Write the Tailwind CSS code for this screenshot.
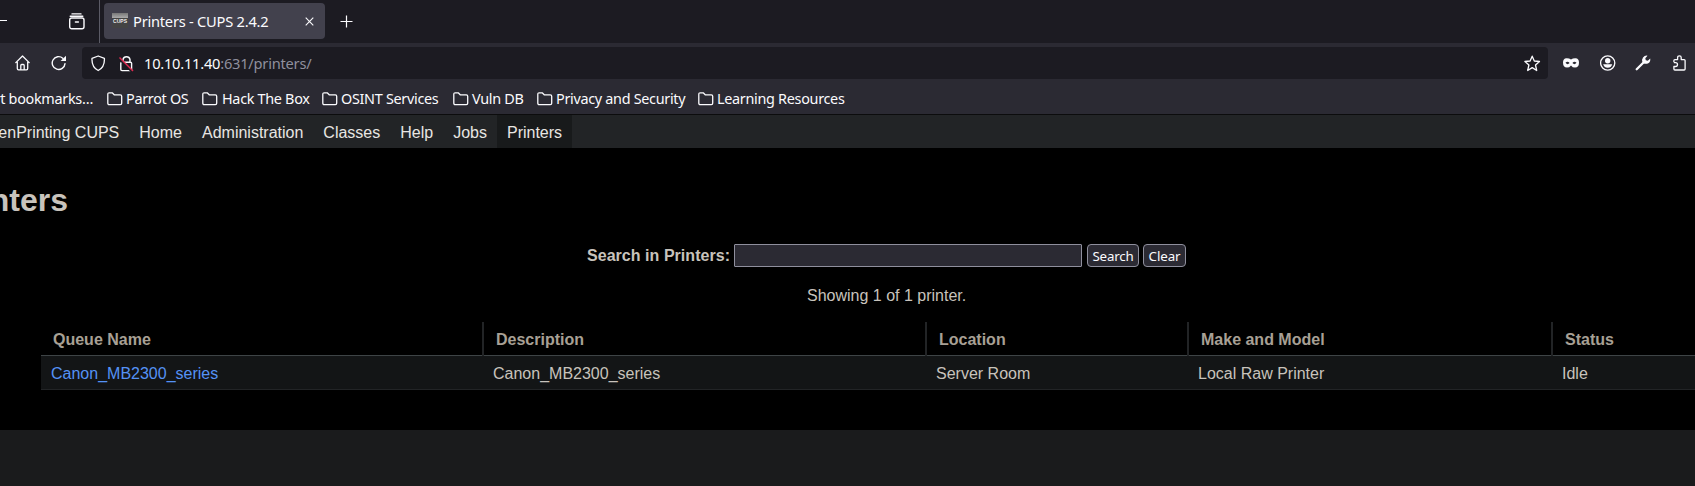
<!DOCTYPE html>
<html lang="en">
<head>
<meta charset="utf-8">
<title>Printers - CUPS 2.4.2</title>
<script src="https://cdn.jsdelivr.net/npm/@tailwindcss/browser@4"></script>
</head>
<body class="w-[1695px] h-[486px] overflow-hidden bg-black font-['Liberation_Sans',sans-serif] text-base text-[#c8c3bc]">
<svg class="hidden">
  <symbol id="folder" viewBox="0 0 16 14"><path d="M.8 11.2V2.2Q.8.8 2.2.8H5.2L7.2 2.8H13.3Q14.7 2.8 14.7 4.2V11.2Q14.7 12.6 13.3 12.6H2.2Q.8 12.6.8 11.2Z" fill="none" stroke="currentColor" stroke-width="1.3" stroke-linejoin="round"/></symbol>
</svg>
<header class="font-['Noto_Sans',sans-serif] text-[#fbfbfe]">
  <div class="flex h-[43px] bg-[#1c1b22]">
    <div class="flex w-[100px] h-[43px] shrink-0 border-r border-[#5b5b66]">
      <div class="w-[7px] h-px mt-5 bg-[#fbfbfe]"></div>
      <svg class="w-[18px] h-[18px] ml-[61px] mt-3" viewBox="0 0 18 18" fill="none" stroke="currentColor" stroke-width="1.4" stroke-linecap="round"><path d="M4 1.9H13M2.2 4.3H14.8"/><rect x="1.7" y="6" width="14.3" height="10.8" rx="2"/><path d="M7.4 10H10.4"/></svg>
    </div>
    <div class="flex items-center w-[221px] h-9 mt-[3px] ml-1 shrink-0 rounded bg-[#42414d] text-[14.67px]">
      <svg class="w-4 h-4 ml-2 -mt-px shrink-0" viewBox="0 0 16 16"><defs><linearGradient id="g" x2="0" y2="1"><stop stop-color="#777"/><stop offset="1" stop-color="#aaa"/></linearGradient></defs><path fill="url(#g)" d="M0 0h16v5H0z"/><path fill="#444" d="M0 5h16v10H0z"/><text x="1" y="10.3" textLength="14" lengthAdjust="spacingAndGlyphs" font-family="Liberation Sans" font-size="6" font-weight="bold" fill="#eee">CUPS</text></svg>
      <span class="ml-[5px] w-[172px] whitespace-nowrap tracking-[-0.24px]">Printers - CUPS 2.4.2</span>
      <svg class="w-[9px] h-[9px] shrink-0" viewBox="0 0 9 9" stroke="currentColor" stroke-width="1.1"><path d="M.7.7 8.3 8.3M8.3.7.7 8.3"/></svg>
    </div>
    <svg class="w-[13px] h-[13px] mt-[15px] ml-[15px]" viewBox="0 0 13 13" stroke="currentColor" stroke-width="1.2"><path d="M6.5 .5V12.5M.5 6.5H12.5"/></svg>
  </div>
  <div class="flex items-center h-10 bg-[#2b2a33]">
    <svg class="w-4 h-4 ml-[15px]" viewBox="0 0 16 16" fill="none" stroke="currentColor" stroke-width="1.3" stroke-linejoin="round" stroke-linecap="round"><path d="M.8 7.6 7.5 1 14.2 7.6M2.3 6.8V13.6Q2.3 14.8 3.5 14.8H11.5Q12.7 14.8 12.7 13.6V6.8M5.8 14.5V10.4Q5.8 9.5 6.7 9.5H8.3Q9.2 9.5 9.2 10.4V14.5"/></svg>
    <svg class="w-4 h-4 ml-5" viewBox="0 0 16 16"><path d="M14 8.6A6.4 6.4 0 1 1 11.8 3.2" fill="none" stroke="currentColor" stroke-width="1.4" stroke-linecap="round"/><path d="M15 .8V6H9.6Z" fill="currentColor"/></svg>
    <div class="flex items-center w-[1466px] h-8 ml-[15px] rounded bg-[#1c1b22] text-[14.67px]">
      <svg class="w-[15px] h-[17px] ml-[9px]" viewBox="0 0 15 17" fill="none" stroke="currentColor" stroke-width="1.3" stroke-linejoin="round"><path d="M7.2 1 13.4 3.3Q13.9 12.3 7.2 15.5Q.5 12.3 1 3.3Z"/></svg>
      <svg class="w-[15px] h-[17px] ml-[13px]" viewBox="0 0 15 17" fill="none"><path d="M4 7V4.5A3.6 3.6 0 0 1 11 4.5V7M3.2 7.2H11.5Q12.6 7.2 12.6 8.3V14.5Q12.6 15.6 11.5 15.6H3Q1.8 15.6 1.8 14.5V8.3Q1.8 7.2 3.2 7.2" stroke="currentColor" stroke-width="1.4"/><path d="M0 3.8 13 16.8" stroke="#1c1b22" stroke-width="2"/><path d="M.5 2.5 14 16" stroke="#e22850" stroke-width="1.4"/></svg>
      <span class="ml-[10px] whitespace-nowrap tracking-[-0.24px]">10.10.11.40<span class="text-[#8f8f9d]">:631/printers/</span></span>
      <svg class="w-[17px] h-[17px] ml-auto mr-[7px]" viewBox="0 0 17 17" fill="none" stroke="currentColor" stroke-width="1.3" stroke-linejoin="round"><path d="M8.2 1.2 10.3 6 15.5 6.5 11.5 10 12.7 15.5 8.2 12.6 3.7 15.5 4.9 10 .9 6.5 6.1 6Z"/></svg>
    </div>
    <svg class="w-4 h-[10px] ml-[15px]" viewBox="0 0 16 10"><path fill="currentColor" fill-rule="evenodd" d="M3.5.3Q6 .2 8 1.4Q10 .2 12.5.3Q16 .6 16 4.4Q16 9.4 12 9.6Q9.6 9.6 8 7.4Q6.4 9.6 4 9.6Q0 9.4 0 4.4Q0 .6 3.5.3ZM2.5 4.8Q4.5 7.4 6.6 5Q4.5 2.4 2.5 4.8ZM9.4 5Q11.5 7.4 13.5 4.8Q11.5 2.4 9.4 5Z"/></svg>
    <svg class="w-4 h-4 ml-[21px]" viewBox="0 0 16 16"><circle cx="7.7" cy="8" r="7.1" fill="none" stroke="currentColor" stroke-width="1.3"/><circle cx="7.7" cy="5.7" r="2.7" fill="currentColor"/><path d="M3.2 9.3H12.2Q11.2 12.8 7.7 12.8Q4.2 12.8 3.2 9.3Z" fill="currentColor"/></svg>
    <svg class="w-4 h-4 ml-[19px]" viewBox="0 0 16 16"><path d="M1.7 14.3 8.5 7.5" stroke="currentColor" stroke-width="2.3" stroke-linecap="round"/><path d="M12.5.7 10.3 3.2 10.8 5.2 12.8 5.7 15.2 3.4Q15.8 6.6 13.3 8.2Q11 9.4 8.8 8.4L7.4 7Q6.6 4.5 8 2.5Q9.8.2 12.5.7Z" fill="currentColor"/></svg>
    <svg class="w-4 h-4 ml-[21px]" viewBox="0 0 16 16" fill="none" stroke="currentColor" stroke-width="1.3" stroke-linejoin="round"><path d="M1.9 7.3V5.6Q1.9 4.6 2.9 4.6H5.6V2.6A1.8 1.8 0 0 1 9.2 2.6V4.6H12.1Q13.1 4.6 13.1 5.6V14Q13.1 15 12.1 15H2.9Q1.9 15 1.9 14V11.5H3.6A1.9 1.9 0 0 0 3.6 7.7H1.9"/></svg>
  </div>
  <div class="flex items-center h-[31px] bg-[#2b2a33] text-[14.4px] leading-5 tracking-[-0.3px] whitespace-nowrap">
    <span class="flex w-[107px] shrink-0"><span class="w-[93px] flex justify-end">Import bookmarks…</span></span>
    <span class="flex items-center w-[95px]"><svg class="w-4 h-[14px] mr-[3px]"><use href="#folder"/></svg>Parrot OS</span>
    <span class="flex items-center w-[120px]"><svg class="w-4 h-[14px] mr-1"><use href="#folder"/></svg>Hack The Box</span>
    <span class="flex items-center w-[131px]"><svg class="w-4 h-[14px] mr-[3px]"><use href="#folder"/></svg>OSINT Services</span>
    <span class="flex items-center w-[84px]"><svg class="w-4 h-[14px] mr-[3px]"><use href="#folder"/></svg>Vuln DB</span>
    <span class="flex items-center w-[161px]"><svg class="w-4 h-[14px] mr-[3px]"><use href="#folder"/></svg>Privacy and Security</span>
    <span class="flex items-center"><svg class="w-4 h-[14px] mr-[3px]"><use href="#folder"/></svg>Learning Resources</span>
  </div>
</header>
<nav class="flex h-[34px] border-t border-[#0c0c0d] bg-[#222426] text-[#e8e6e3] leading-[35px] whitespace-nowrap">
  <a class="px-2.5 -ml-[33px]">OpenPrinting CUPS</a><a class="px-2.5">Home</a><a class="px-2.5">Administration</a><a class="px-2.5">Classes</a><a class="px-2.5">Help</a><a class="px-2.5">Jobs</a><a class="px-2.5 h-[33px] bg-[#181a1b]">Printers</a>
</nav>
<main class="h-[282px] bg-black overflow-hidden">
  <h1 class="mt-[34px] -ml-[53px] text-[32px] leading-9 font-bold">Printers</h1>
  <form class="flex items-center mt-[25px] ml-[587px] h-6">
    <label class="w-[147px] font-bold whitespace-nowrap tracking-[0.04px] mt-px">Search in Printers:</label>
    <input class="w-[348px] h-[23px] border border-[#8f8f9d] rounded-[1px] bg-[#2b2a33]">
    <button type="button" class="w-[52px] h-[23px] ml-[5px] border border-[#8f8f9d] rounded bg-[#2b2a33] text-[#fbfbfe] font-['Noto_Sans',sans-serif] text-[13.33px] leading-[23px] tracking-[-0.2px]">Search</button>
    <button type="button" class="w-[43px] h-[23px] ml-1 border border-[#8f8f9d] rounded bg-[#2b2a33] text-[#fbfbfe] font-['Noto_Sans',sans-serif] text-[13.33px] leading-[23px] tracking-[-0.1px]">Clear</button>
  </form>
  <p class="mt-[17px] ml-[807px] leading-6">Showing 1 of 1 printer.</p>
  <div class="ml-[41px] mt-[14px] grid grid-cols-[443px_443px_262px_364px_142px] whitespace-nowrap">
    <div class="h-[34px] pl-3 border-b border-[#3e4446] font-bold leading-[35px] text-[#a8a095]">Queue Name</div>
    <div class="flex h-[34px] border-b border-[#3e4446] font-bold leading-[35px] text-[#a8a095]"><i class="-ml-0.5 w-0.5 h-[34px] mr-3 bg-[#222426]"></i>Description</div>
    <div class="flex h-[34px] border-b border-[#3e4446] font-bold leading-[35px] text-[#a8a095]"><i class="-ml-0.5 w-0.5 h-[34px] mr-3 bg-[#222426]"></i>Location</div>
    <div class="flex h-[34px] border-b border-[#3e4446] font-bold leading-[35px] text-[#a8a095]"><i class="-ml-0.5 w-0.5 h-[34px] mr-3 bg-[#222426]"></i>Make and Model</div>
    <div class="flex h-[34px] border-b border-[#3e4446] font-bold leading-[35px] text-[#a8a095]"><i class="-ml-0.5 w-0.5 h-[34px] mr-3 bg-[#222426]"></i>Status</div>
    <div class="h-[34px] pl-[10px] border-b border-[#222426] bg-[#131516] leading-[35px] text-[#5592f5]">Canon_MB2300_series</div>
    <div class="h-[34px] pl-[9px] border-b border-[#222426] bg-[#131516] leading-[35px]">Canon_MB2300_series</div>
    <div class="h-[34px] pl-[9px] border-b border-[#222426] bg-[#131516] leading-[35px]">Server Room</div>
    <div class="h-[34px] pl-[9px] border-b border-[#222426] bg-[#131516] leading-[35px]">Local Raw Printer</div>
    <div class="h-[34px] pl-[9px] border-b border-[#222426] bg-[#131516] leading-[35px]">Idle</div>
  </div>
</main>
<footer class="h-14 bg-[#1a1b1c]"></footer>
</body>
</html>
